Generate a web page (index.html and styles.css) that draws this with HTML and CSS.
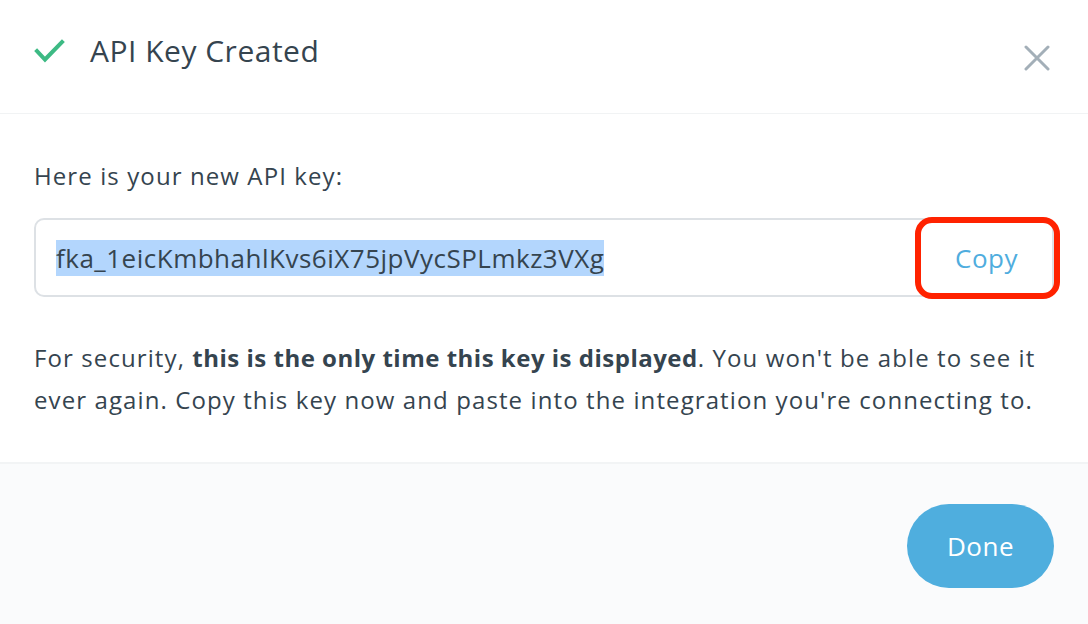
FILE: index.html
```html
<!DOCTYPE html>
<html lang="en">
<head>
    <meta charset="UTF-8">
    <title>API Key Created</title>
    <link rel="stylesheet" href="styles.css">
</head>
<body>
    <div class="modal">
        <div class="modal-header">
            <svg class="check" width="32" height="26" viewBox="0 0 32 26">
                <path d="M3 13 L11 21.5 L28 4" fill="none" stroke="#3dba84" stroke-width="4" stroke-linecap="square"/>
            </svg>
            <div class="modal-title">API Key Created</div>
            <button class="close" aria-label="Close">
                <svg width="26" height="26" viewBox="0 0 26 26">
                    <path d="M2 2 L24 24 M24 2 L2 24" stroke="#a3afb8" stroke-width="3" stroke-linecap="round"/>
                </svg>
            </button>
        </div>

        <div class="modal-body">
            <div class="label">Here is your new API key:</div>
            <div class="key-box">
                <span class="key"><span class="selected">fka_1eicKmbhahlKvs6iX75jpVycSPLmkz3VXg</span></span>
                <button class="copy">Copy</button>
            </div>
            <p class="note">For security, <strong>this is the only time this key is displayed</strong>. You won't be able to see it ever again. Copy this key now and paste into the integration you're connecting to.</p>
        </div>

        <div class="modal-footer">
            <button class="done">Done</button>
        </div>
    </div>
</body>
</html>
```

FILE: styles.css
```css
* {
    margin: 0;
    padding: 0;
    box-sizing: border-box;
}

body, html {
    height: 100%;
    overflow: hidden;
    font-family: "Open Sans", "Liberation Sans", sans-serif;
    letter-spacing: 0.5px;
    background-color: #ffffff;
    color: #35444f;
}

.modal {
    display: flex;
    flex-direction: column;
    height: 100vh;
}

.modal-header {
    flex-shrink: 0;
    display: flex;
    align-items: flex-start;
    height: 114px;
    padding: 32px 38px 0 34px;
    border-bottom: 1px solid #f1f3f4;
}

.check {
    margin-top: 6px;
}

.modal-title {
    margin-left: 24px;
    font-size: 30px;
    line-height: 38px;
    flex-grow: 1;
}

.close {
    background: transparent;
    border: none;
    margin-top: 13px;
    cursor: pointer;
}

.modal-body {
    flex-shrink: 0;
    padding: 46px 34px 41px 34px;
}

.label {
    font-size: 24px;
    line-height: 32px;
    letter-spacing: 1.1px;
}

.key-box {
    display: flex;
    align-items: center;
    justify-content: space-between;
    margin-top: 26px;
    height: 79px;
    border: 2px solid #dde1e5;
    border-radius: 10px;
    padding-left: 20px;
}

.key {
    font-size: 26px;
    line-height: 40px;
}

.selected {
    background-color: #b3d6fd;
}

.copy {
    position: relative;
    width: 131px;
    height: 70px;
    background: transparent;
    border: none;
    font-family: inherit;
    letter-spacing: 0.5px;
    font-size: 26px;
    color: #4fadde;
    cursor: pointer;
}

/* red annotation round the copy button */
.copy::after {
    content: "";
    position: absolute;
    top: -6px;
    left: -6px;
    right: -8px;
    bottom: -6px;
    border: 6px solid #ff2200;
    border-radius: 17px;
}

.note {
    margin-top: 40px;
    font-size: 24px;
    line-height: 42px;
    letter-spacing: 1.1px;
}

.note strong {
    font-weight: 700;
    letter-spacing: 0.5px;
}

.modal-footer {
    flex-grow: 1;
    display: flex;
    justify-content: flex-end;
    align-items: flex-start;
    padding: 40px 34px 0 34px;
    background-color: #fafbfc;
    border-top: 2px solid #f2f4f5;
}

.done {
    width: 147px;
    height: 84px;
    border: none;
    border-radius: 42px;
    background-color: #4faede;
    color: #ffffff;
    font-family: inherit;
    letter-spacing: 0.5px;
    font-size: 26px;
    cursor: pointer;
}
```
